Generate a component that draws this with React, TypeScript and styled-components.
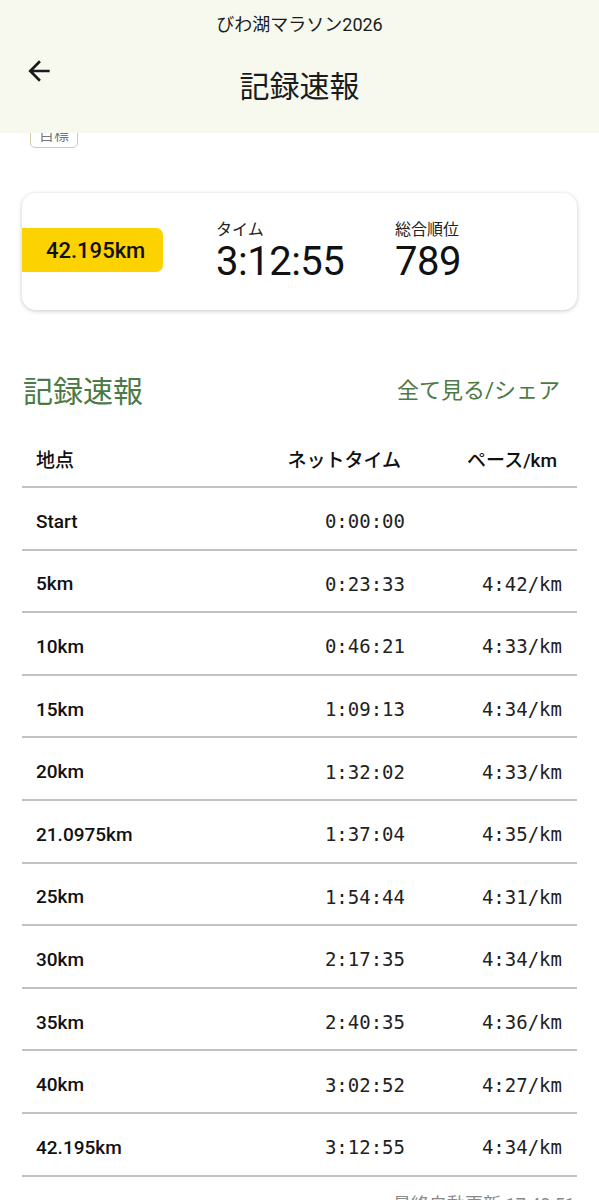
import styled, { createGlobalStyle } from "styled-components";

const GlobalStyle = createGlobalStyle`
  html, body {
    margin: 0;
    padding: 0;
    background: #ffffff;
  }
  body {
    font-family: Roboto, "Noto Sans CJK JP", sans-serif;
    color: #1a1a1a;
    overflow: hidden;
  }
`;

const green = "#4b7a45";

const Page = styled.div`
  width: 599px;
  height: 1200px;
  overflow: hidden;
  display: flex;
  flex-direction: column;
`;

const Header = styled.header`
  background: #f7f9ef;
  height: 133px;
  display: flex;
  flex-direction: column;
  flex-shrink: 0;
`;

const EventName = styled.div`
  height: 46px;
  display: flex;
  align-items: center;
  justify-content: center;
  font-size: 18px;
  color: #1b1b1b;
`;

const Bar = styled.div`
  flex: 1;
  display: grid;
  grid-template-columns: 1fr auto 1fr;
`;

const BackButton = styled.button`
  justify-self: start;
  align-self: start;
  margin: 9px 0 0 23px;
  padding: 0;
  border: none;
  background: none;
  width: 32px;
  height: 32px;
  color: #1b1b1b;
`;

const PageTitle = styled.h1`
  margin: 23px 0 0;
  align-self: start;
  font-size: 30px;
  font-weight: 400;
  line-height: 36px;
  color: #1b1b1b;
`;

const BadgeClip = styled.div`
  height: 15px;
  overflow: hidden;
  display: flex;
  align-items: flex-end;
  padding-left: 30px;
  flex-shrink: 0;
`;

const Badge = styled.span`
  display: inline-flex;
  align-items: flex-start;
  justify-content: center;
  width: 48px;
  height: 26px;
  box-sizing: border-box;
  padding-top: 3px;
  border: 1.5px solid #d3cba6;
  border-radius: 5px;
  font-size: 15px;
  line-height: 18px;
  color: #777;
`;

const Card = styled.section`
  margin: 45px 22px 0;
  height: 117px;
  border-radius: 14px;
  background: #fff;
  box-shadow: 0 1px 4px rgba(0, 0, 0, 0.22);
  display: flex;
  align-items: center;
  flex-shrink: 0;
`;

const DistanceTag = styled.div`
  width: 141px;
  height: 44px;
  box-sizing: border-box;
  padding-left: 24px;
  background: #fcd200;
  border-radius: 0 7px 7px 0;
  display: flex;
  align-items: center;
  font-size: 22px;
  font-weight: 500;
  color: #111;
  margin-top: -3px;
  margin-right: 53px;
`;

const Stat = styled.div<{ $width?: number }>`
  width: ${(p) => (p.$width ? `${p.$width}px` : "auto")};
  display: flex;
  flex-direction: column;
`;

const StatLabel = styled.span`
  font-size: 16px;
  line-height: 20px;
  color: #222;
`;

const StatValue = styled.span`
  font-size: 40px;
  line-height: 44px;
  color: #111;
  letter-spacing: -0.5px;
`;

const SectionHead = styled.div`
  margin: 62px 22px 0 23px;
  display: flex;
  align-items: center;
  justify-content: space-between;
  flex-shrink: 0;
`;

const SectionTitle = styled.h2`
  margin: 0;
  font-size: 30px;
  font-weight: 400;
  line-height: 40px;
  color: ${green};
`;

const SectionLink = styled.a`
  font-size: 22px;
  color: ${green};
  text-decoration: none;
  margin-right: 17px;
  margin-top: -8px;
`;

const Table = styled.div`
  margin: 22px 22px 0;
  display: flex;
  flex-direction: column;
  flex-shrink: 0;
`;

const Row = styled.div<{ $head?: boolean }>`
  display: grid;
  grid-template-columns: 1fr 150px 157px;
  align-items: center;
  box-sizing: border-box;
  height: ${(p) => (p.$head ? "54px" : "62.6px")};
  padding: ${(p) => (p.$head ? "0 20px 4px 14px" : "6px 15px 0 14px")};
  border-bottom: 2px solid #c2c2c2;
`;

const HeadCell = styled.span<{ $right?: boolean; $gap?: number }>`
  font-size: 19px;
  font-weight: 500;
  color: #111;
  text-align: ${(p) => (p.$right ? "right" : "left")};
  margin-right: ${(p) => p.$gap ?? 0}px;
`;

const Point = styled.span`
  font-size: 19px;
  font-weight: 500;
  color: #111;
`;

const Mono = styled.span`
  font-family: "DejaVu Sans Mono", "Liberation Mono", monospace;
  font-size: 19px;
  color: #222;
  text-align: right;
`;

const Updated = styled.div`
  margin: 13px 24px 0 0;
  text-align: right;
  font-size: 18px;
  color: #8a8a8a;
`;

const splits = [
  ["Start", "0:00:00", ""],
  ["5km", "0:23:33", "4:42/km"],
  ["10km", "0:46:21", "4:33/km"],
  ["15km", "1:09:13", "4:34/km"],
  ["20km", "1:32:02", "4:33/km"],
  ["21.0975km", "1:37:04", "4:35/km"],
  ["25km", "1:54:44", "4:31/km"],
  ["30km", "2:17:35", "4:34/km"],
  ["35km", "2:40:35", "4:36/km"],
  ["40km", "3:02:52", "4:27/km"],
  ["42.195km", "3:12:55", "4:34/km"],
];

function BackArrow() {
  return (
    <svg width="32" height="32" viewBox="0 0 24 24" fill="currentColor">
      <path d="M20 11H7.83l5.59-5.59L12 4l-8 8 8 8 1.41-1.41L7.83 13H20v-2z" />
    </svg>
  );
}

export default function App() {
  return (
    <Page>
      <GlobalStyle />
      <Header>
        <EventName>びわ湖マラソン2026</EventName>
        <Bar>
          <BackButton aria-label="戻る">
            <BackArrow />
          </BackButton>
          <PageTitle>記録速報</PageTitle>
          <div />
        </Bar>
      </Header>

      <BadgeClip>
        <Badge>目標</Badge>
      </BadgeClip>

      <Card>
        <DistanceTag>42.195km</DistanceTag>
        <Stat $width={179}>
          <StatLabel>タイム</StatLabel>
          <StatValue>3:12:55</StatValue>
        </Stat>
        <Stat>
          <StatLabel>総合順位</StatLabel>
          <StatValue>789</StatValue>
        </Stat>
      </Card>

      <SectionHead>
        <SectionTitle>記録速報</SectionTitle>
        <SectionLink href="#">全て見る/シェア</SectionLink>
      </SectionHead>

      <Table>
        <Row $head>
          <HeadCell>地点</HeadCell>
          <HeadCell $right $gap={-1}>ネットタイム</HeadCell>
          <HeadCell $right>ペース/km</HeadCell>
        </Row>
        {splits.map(([point, time, pace]) => (
          <Row key={point}>
            <Point>{point}</Point>
            <Mono>{time}</Mono>
            <Mono>{pace}</Mono>
          </Row>
        ))}
      </Table>

      <Updated>最終自動更新 17:40:51</Updated>
    </Page>
  );
}
